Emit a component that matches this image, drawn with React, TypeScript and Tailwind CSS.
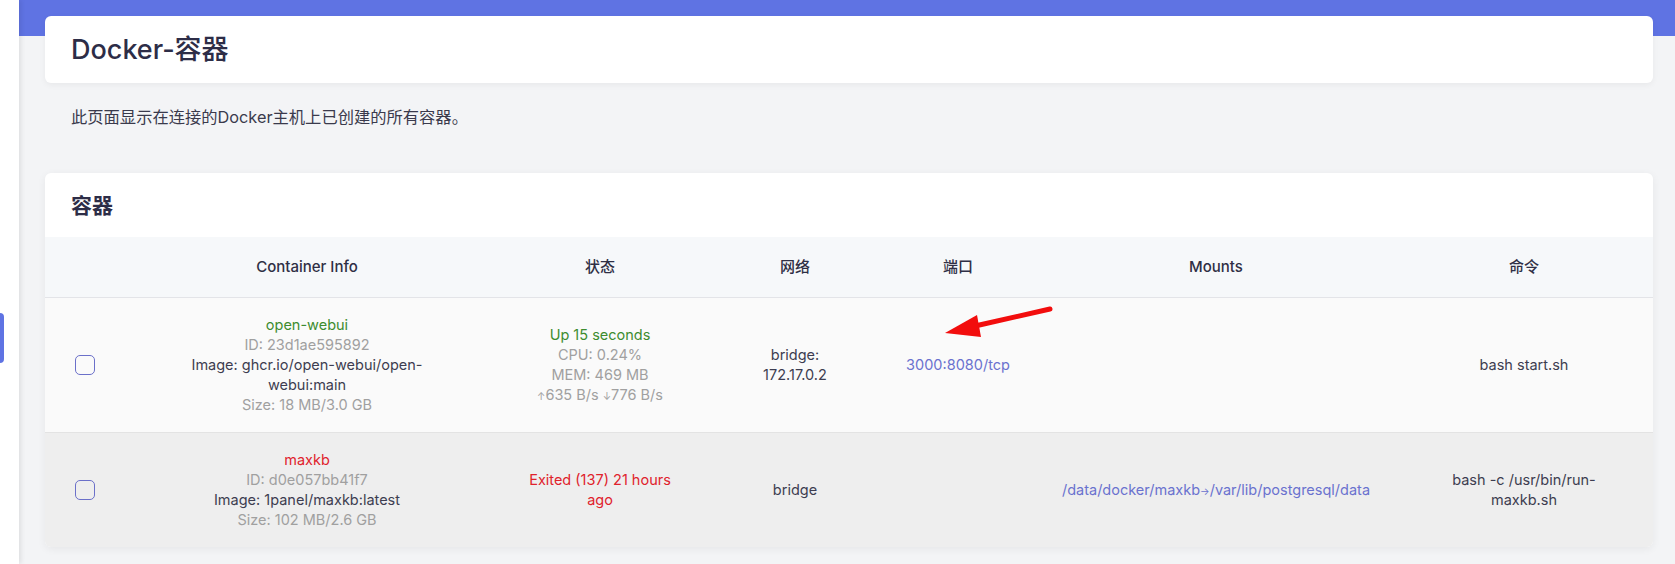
const cols = "grid grid-cols-[80px_364px_222px_168px_158px_358px_258px]";

function Checkbox() {
  return <div className="h-[20px] w-[20px] rounded-[5px] border border-[#6b70c9] bg-transparent" />;
}

function Cell({ children, className = "" }: { children?: React.ReactNode; className?: string }) {
  return (
    <div className={`flex flex-col items-center justify-center text-center ${className}`}>{children}</div>
  );
}

export default function App() {
  return (
    <div className="relative flex h-[564px] w-[1675px] overflow-hidden bg-[#f3f4f6] font-['Inter','Noto_Sans_CJK_SC',sans-serif]">
      <aside className="z-10 flex w-[19px] shrink-0 flex-col bg-white pt-[313px] shadow-[2px_0_5px_rgba(0,0,0,0.09)]">
        <div className="h-[50px] w-[4px] rounded-r-[4px] bg-[#5f73e3]" />
      </aside>
      <main className="flex-1 bg-[linear-gradient(to_bottom,#5f73e3_36px,#f3f4f6_36px)] pl-[26px] pr-[22px] pt-[16px]">
        <div className="flex h-[67px] items-center rounded-[6px] bg-white px-[26px] shadow-[0_2px_6px_rgba(0,0,0,0.05)]">
          <h1 className="text-[27px] font-medium leading-none text-[#2d2d47]">Docker-容器</h1>
        </div>
        <p className="mt-[24px] px-[26px] text-[16.3px] leading-[20px] text-[#3a3a4c]">
          此页面显示在连接的Docker主机上已创建的所有容器。
        </p>
        <section className="mt-[46px] overflow-hidden rounded-[6px] bg-white shadow-[0_2px_8px_rgba(0,0,0,0.06)]">
          <div className="flex h-[64px] items-center px-[26px]">
            <h2 className="text-[21px] font-bold leading-none text-[#2d2d47]">容器</h2>
          </div>
          <div className={`${cols} h-[61px] border-b border-[#e3e4e8] bg-[#f6f8fa] text-[15px] font-medium text-[#2f2f45]`}>
            <Cell />
            <Cell>Container Info</Cell>
            <Cell>状态</Cell>
            <Cell>网络</Cell>
            <Cell>端口</Cell>
            <Cell>Mounts</Cell>
            <Cell>命令</Cell>
          </div>
          <div className={`${cols} border-b border-[#e3e3e3] bg-[#fafafa] py-[17px] text-[14.5px] leading-[20px] text-[#3d3d50]`}>
            <Cell><Checkbox /></Cell>
            <Cell className="px-[48px]">
              <span className="text-[#3d8c2f]">open-webui</span>
              <span className="text-[#a0a0a0]">ID: 23d1ae595892</span>
              <span>Image: ghcr.io/open-webui/open-webui:main</span>
              <span className="text-[#a0a0a0]">Size: 18 MB/3.0 GB</span>
            </Cell>
            <Cell className="px-[32px]">
              <span className="text-[#3d8c2f]">Up 15 seconds</span>
              <span className="text-[#a0a0a0]">CPU: 0.24%</span>
              <span className="text-[#a0a0a0]">MEM: 469 MB</span>
              <span className="text-[#a0a0a0]">
                <span className="text-[10px]">↑</span>635 B/s <span className="text-[10px]">↓</span>776 B/s
              </span>
            </Cell>
            <Cell className="px-[32px]">
              <span>bridge: 172.17.0.2</span>
            </Cell>
            <Cell className="px-[10px]">
              <span className="text-[#6a72cf]">3000:8080/tcp</span>
            </Cell>
            <Cell className="px-[20px]" />
            <Cell className="px-[40px]">
              <span>bash start.sh</span>
            </Cell>
          </div>
          <div className={`${cols} bg-[#eeeeee] py-[17px] text-[14.5px] leading-[20px] text-[#3d3d50]`}>
            <Cell><Checkbox /></Cell>
            <Cell className="px-[48px]">
              <span className="text-[#e0222c]">maxkb</span>
              <span className="text-[#a0a0a0]">ID: d0e057bb41f7</span>
              <span>Image: 1panel/maxkb:latest</span>
              <span className="text-[#a0a0a0]">Size: 102 MB/2.6 GB</span>
            </Cell>
            <Cell className="px-[32px]">
              <span className="text-[#e0222c]">Exited (137) 21 hours ago</span>
            </Cell>
            <Cell className="px-[32px]">
              <span>bridge</span>
            </Cell>
            <Cell className="px-[10px]" />
            <Cell className="px-[20px]">
              <span className="whitespace-nowrap text-[#6a72cf]">
                /data/docker/maxkb<span className="text-[10px]">→</span>/var/lib/postgresql/data
              </span>
            </Cell>
            <Cell className="px-[40px]">
              <span>bash -c /usr/bin/run-maxkb.sh</span>
            </Cell>
          </div>
        </section>
      </main>
      <svg className="pointer-events-none absolute left-[930px] top-[295px]" width="140" height="55" viewBox="930 295 140 55">
        <line x1="1050" y1="309" x2="975" y2="326" stroke="#f20d0d" strokeWidth="5" strokeLinecap="round" />
        <polygon points="945,333 977,315 981,337" fill="#f20d0d" />
      </svg>
    </div>
  );
}
